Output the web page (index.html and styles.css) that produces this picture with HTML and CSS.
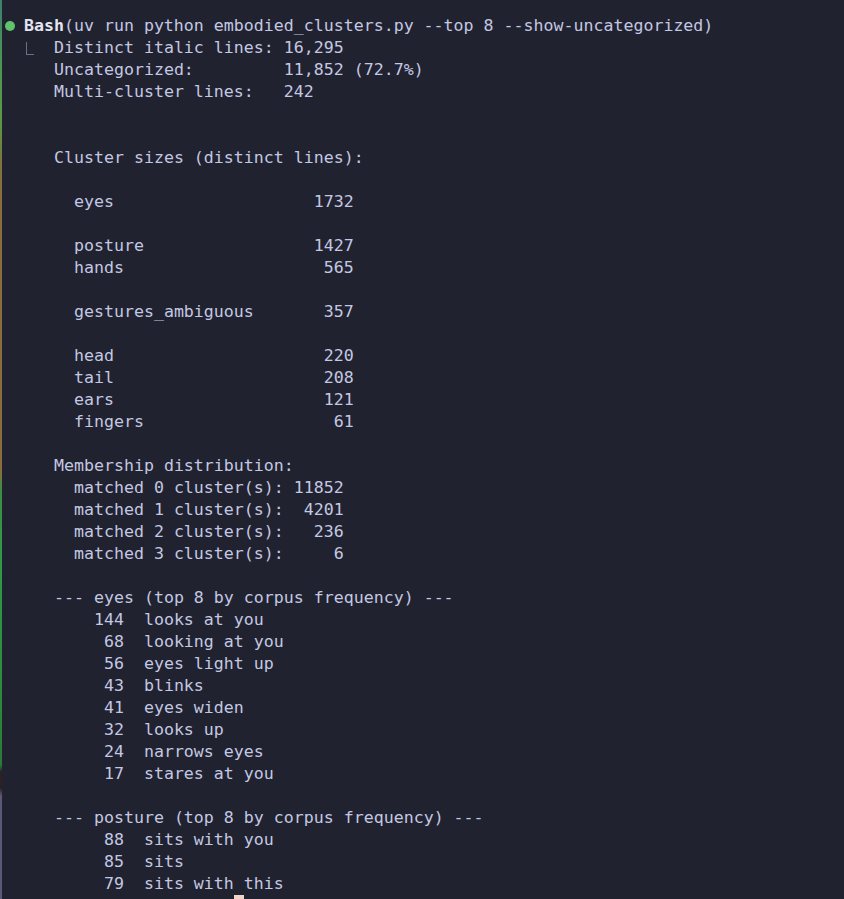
FILE: index.html
```html
<!DOCTYPE html>
<html>
<head>
<meta charset="utf-8">
<link rel="stylesheet" href="styles.css">
</head>
<body>
<div class="screen">
  <div class="strip"></div>
  <div class="term">
    <div class="head">
      <span class="dot"></span>
      <span class="line"><b class="tool">Bash</b>(uv run python embodied_clusters.py --top 8 --show-uncategorized)</span>
    </div>
    <div class="out">
      <div class="gutter"><span class="corner"></span></div>
      <div class="lines">
<div class="line">Distinct italic lines: 16,295</div>
<div class="line">Uncategorized:         11,852 (72.7%)</div>
<div class="line">Multi-cluster lines:   242</div>
<div class="line"> </div>
<div class="line"> </div>
<div class="line">Cluster sizes (distinct lines):</div>
<div class="line"> </div>
<div class="line">  eyes                    1732</div>
<div class="line"> </div>
<div class="line">  posture                 1427</div>
<div class="line">  hands                    565</div>
<div class="line"> </div>
<div class="line">  gestures_ambiguous       357</div>
<div class="line"> </div>
<div class="line">  head                     220</div>
<div class="line">  tail                     208</div>
<div class="line">  ears                     121</div>
<div class="line">  fingers                   61</div>
<div class="line"> </div>
<div class="line">Membership distribution:</div>
<div class="line">  matched 0 cluster(s): 11852</div>
<div class="line">  matched 1 cluster(s):  4201</div>
<div class="line">  matched 2 cluster(s):   236</div>
<div class="line">  matched 3 cluster(s):     6</div>
<div class="line"> </div>
<div class="line">--- eyes (top 8 by corpus frequency) ---</div>
<div class="line">    144  looks at you</div>
<div class="line">     68  looking at you</div>
<div class="line">     56  eyes light up</div>
<div class="line">     43  blinks</div>
<div class="line">     41  eyes widen</div>
<div class="line">     32  looks up</div>
<div class="line">     24  narrows eyes</div>
<div class="line">     17  stares at you</div>
<div class="line"> </div>
<div class="line">--- posture (top 8 by corpus frequency) ---</div>
<div class="line">     88  sits with you</div>
<div class="line">     85  sits</div>
<div class="line">     79  sits with this</div>
<div class="line">     47  sits back<span class="cursor"></span></div>
      </div>
    </div>
  </div>
</div>
</body>
</html>
```

FILE: styles.css
```css
html, body {
  margin: 0;
  padding: 0;
  height: 100%;
  overflow: hidden;
  background: #21222f;
}

.screen {
  display: flex;
  height: 899px;
  overflow: hidden;
}

.strip {
  flex: 0 0 2px;
  background: linear-gradient(to bottom,
    #3f7f6e 0px,
    #4a9656 60px,
    #5c9844 120px,
    #7d7340 165px,
    #8b6c3c 200px,
    #8b6c3c 470px,
    #3d8c48 490px,
    #2f9a44 560px,
    #2b8a3c 700px,
    #2a7a38 765px,
    #2a2025 772px,
    #2a2025 788px,
    #5e5878 796px,
    #5e5878 899px);
}

.term {
  flex: 1;
  padding-top: 15px;
  font-family: "DejaVu Sans Mono", "Liberation Mono", monospace;
  font-size: 16.6px;
  color: #c3c8e3;
}

.line {
  height: 22px;
  line-height: 22px;
  white-space: pre;
}

.head {
  display: flex;
  align-items: center;
  height: 22px;
}

.dot {
  width: 10px;
  height: 10px;
  border-radius: 50%;
  background: #5dc46c;
  margin-left: 3px;
  margin-right: 9px;
}

.tool {
  font-weight: bold;
  color: #e4e6f2;
}

.out {
  display: flex;
}

.gutter {
  flex: 0 0 52px;
}

.corner {
  display: block;
  width: 7px;
  height: 12px;
  margin-left: 24px;
  margin-top: 5px;
  border-left: 1px solid #6c6f86;
  border-bottom: 1px solid #6c6f86;
}

.lines {
  flex: 1;
}

.cursor {
  display: inline-block;
  width: 10px;
  height: 22px;
  vertical-align: top;
  background: #f3d3c7;
}
```
